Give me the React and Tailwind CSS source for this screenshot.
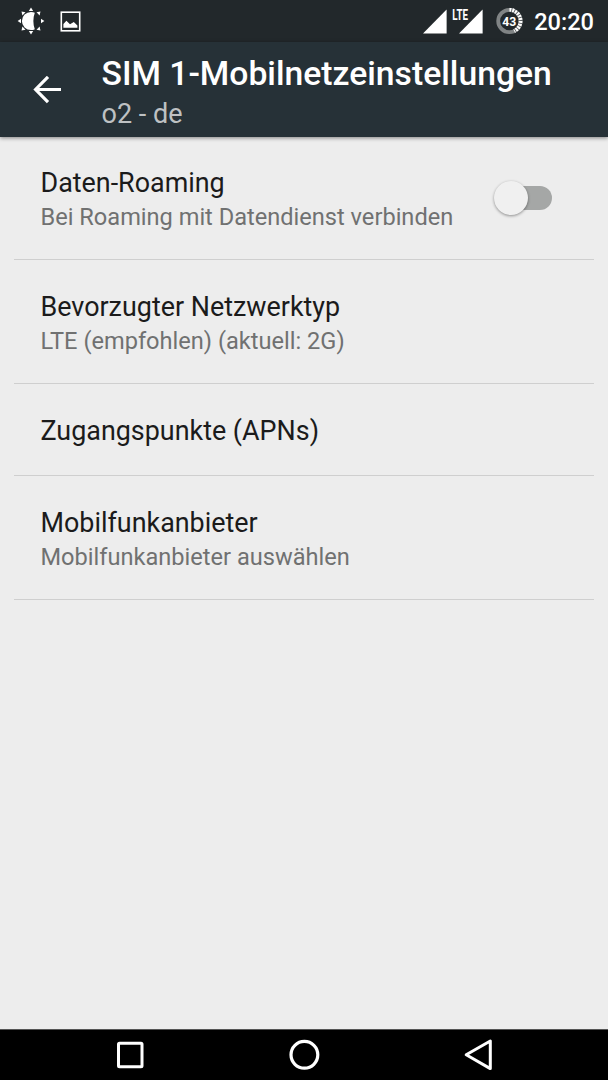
import React, { useState } from 'react';

const SETTINGS = [
    { id: 'roaming', title: 'Daten-Roaming', summary: 'Bei Roaming mit Datendienst verbinden', toggle: true },
    { id: 'network', title: 'Bevorzugter Netzwerktyp', summary: 'LTE (empfohlen) (aktuell: 2G)' },
    { id: 'apn', title: 'Zugangspunkte (APNs)' },
    { id: 'carrier', title: 'Mobilfunkanbieter', summary: 'Mobilfunkanbieter auswählen' },
];

const BrightnessIcon = () => (
    <svg width="28" height="28" viewBox="0 0 28 28" fill="#fff">
        {/* Half-lit disc */}
        <path d="M17.8 5.8C16.8 5.2 15.6 4.9 14 4.9A9.1 9.1 0 0 0 14 23.1C15.6 23.1 16.8 22.8 17.8 22.2C15.9 17 15.9 11 17.8 5.8Z" />
        {[0, 45, 90, 135, 180, 225, 270, 315].map((angle) => (
            <path key={angle} d="M14 0.6L16.2 4H11.8Z" transform={`rotate(${angle} 14 14)`} />
        ))}
    </svg>
);

const PictureIcon = () => (
    <svg width="21" height="21" viewBox="0 0 21 21">
        <rect x="1.3" y="1.2" width="18.4" height="18.6" fill="none" stroke="#fff" strokeWidth="1.6" />
        <path d="M3.4 16.8V13L6.4 9.8L10 13.2L13.8 11L17.4 14.4V16.8Z" fill="#fff" />
    </svg>
);

const SignalIcon = ({ label }) => (
    <svg width="32" height="38" viewBox="0 -6 32 38" fill="#fff">
        <path d="M31.6 1.5V25.6H8Z" />
        {label && (
            <text x="1.2" y="12" fontSize="15" fontWeight="700" textLength="15.8" lengthAdjust="spacingAndGlyphs">
                {label}
            </text>
        )}
    </svg>
);

const BatteryIcon = ({ level }) => (
    <svg width="28" height="28" viewBox="0 0 28 28">
        <circle cx="14.4" cy="14" r="11.2" fill="none" stroke="#808485" strokeWidth="3.8" />
        <path d="M14.4 2.8A11.2 11.2 0 0 1 19.2 24.1" fill="none" stroke="#5c6163" strokeWidth="3.9" />
        <path d="M14.4 2.8A11.2 11.2 0 0 1 19.2 24.1" fill="none" stroke="#fff" strokeWidth="3.8" strokeDasharray="2 0.9" />
        <text x="14.3" y="18.7" textAnchor="middle" fontSize="13" fontWeight="700" textLength="14" lengthAdjust="spacingAndGlyphs" fill="#fff">{level}</text>
    </svg>
);

const StatusBar = () => (
    <div className="h-[42px] shrink-0 bg-[#22282b] flex items-center justify-between pl-[17px] pr-[14px] text-white">
        <div className="flex items-center gap-[15px]">
            <BrightnessIcon />
            <PictureIcon />
        </div>
        <div className="flex items-center">
            <SignalIcon />
            <div className="ml-1"><SignalIcon label="LTE" /></div>
            <div className="ml-3 mr-[11px]"><BatteryIcon level={43} /></div>
            <span className="text-[23.6px] leading-none font-medium pt-[3px]">20:20</span>
        </div>
    </div>
);

const Header = () => (
    <header className="relative z-10 h-[95px] shrink-0 bg-[#263137] flex shadow-[0_1px_4px_rgba(0,0,0,0.45)]">
        <button className="pl-[33px] w-[101.5px] shrink-0 flex items-center">
            <svg width="29" height="28" viewBox="0 0 29 28" fill="none" stroke="#fff" strokeWidth="3.2">
                <path d="M28 13.5H3M15 0.9L2.6 13.5L15 26.1" />
            </svg>
        </button>
        <div className="pt-3 whitespace-nowrap">
            <h1 className="text-[33.7px] leading-[40px] font-medium text-white">SIM 1-Mobilnetzeinstellungen</h1>
            <p className="text-[27px] leading-[41px] text-[#bec1c3]">o2 - de</p>
        </div>
    </header>
);

const Switch = ({ on, onChange }) => (
    <button role="switch" aria-checked={on} onClick={onChange} className="w-[58px] h-[36px] flex items-center">
        <span className={`w-[34px] h-[34px] rounded-full shadow-[0_1px_3px_rgba(0,0,0,0.4)] z-10 ${on ? 'order-2 bg-teal-600' : 'bg-[#f0f0f0]'}`} />
        <span className={`h-[24px] w-[41px] bg-[#a5a7a6] rounded-full ${on ? '-mr-[17px]' : '-ml-[17px]'}`} />
    </button>
);

const SettingRow = ({ item, checked, onToggle }) => (
    <div className={`mx-[14px] border-b border-[#cfcfcf] pl-[26.5px] pr-[42px] flex justify-between ${item.summary ? 'h-[124px]' : 'h-[92px]'}`}>
        <div className="pt-[30px] whitespace-nowrap">
            <div className="text-[26.9px] leading-[34px] text-[#1b1b1b]">{item.title}</div>
            {item.summary && <div className="text-[23.6px] leading-[34px] text-[#707171]">{item.summary}</div>}
        </div>
        {item.toggle && (
            <div className="flex items-center">
                <Switch on={checked} onChange={onToggle} />
            </div>
        )}
    </div>
);

const NavBar = () => (
    <nav className="h-[51px] shrink-0 bg-black border-t border-[#555] flex items-center justify-between pl-[116px] pr-[114px]">
        <svg width="28" height="28" viewBox="0 0 28 28" fill="none" stroke="#fff" strokeWidth="3">
            <rect x="2.5" y="2.2" width="23.5" height="23.5" rx="1" />
        </svg>
        <svg width="32" height="32" viewBox="0 0 32 32" fill="none" stroke="#fff" strokeWidth="3.2">
            <circle cx="16.4" cy="15.8" r="13.4" />
        </svg>
        <svg width="30" height="34" viewBox="0 0 30 34" fill="none" stroke="#fff" strokeWidth="3" strokeLinejoin="round">
            <path d="M26.3 3V30.6L2.2 16.8Z" />
        </svg>
    </nav>
);

const App = () => {
    const [roaming, setRoaming] = useState(false);

    return (
        <div className="w-full h-screen flex flex-col overflow-hidden bg-[#ededed] font-[Roboto,sans-serif]">
            <StatusBar />
            <Header />
            <main className="flex-1 -mt-px">
                {SETTINGS.map((item) => (
                    <SettingRow key={item.id} item={item} checked={roaming} onToggle={() => setRoaming(!roaming)} />
                ))}
            </main>
            <NavBar />
        </div>
    );
};

export default App;
